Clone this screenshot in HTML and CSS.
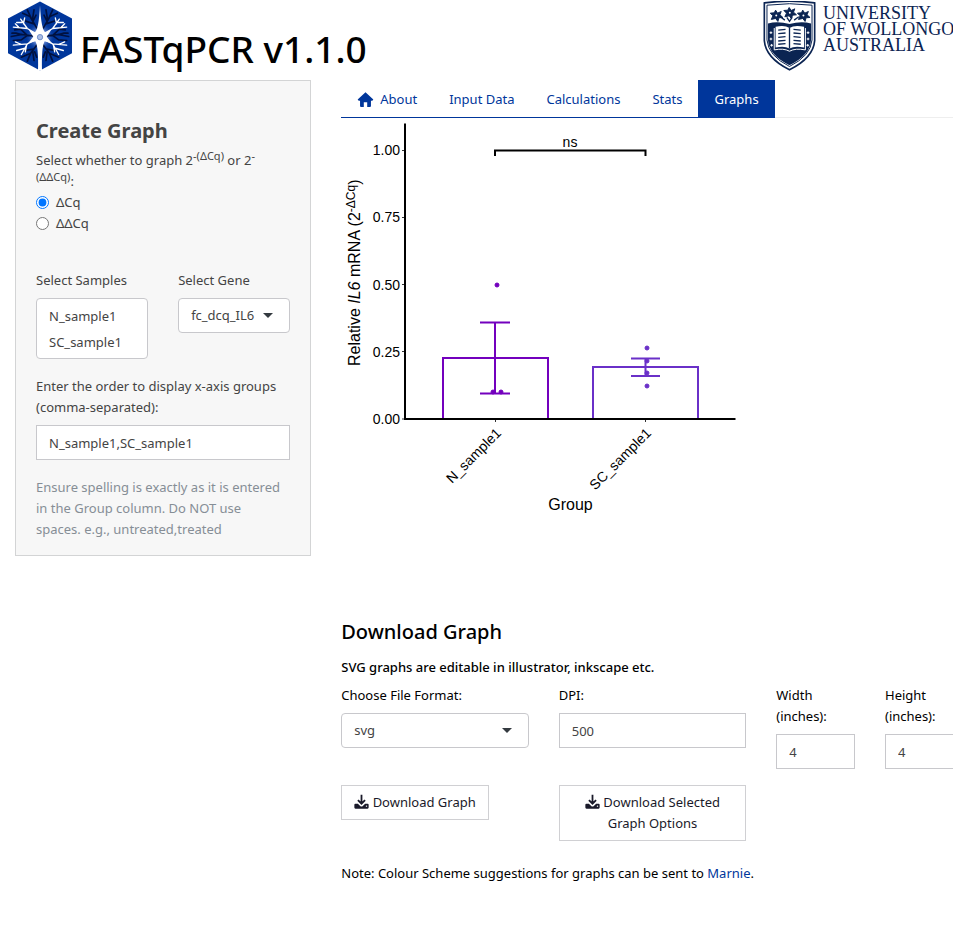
FILE: index.html
```html
<!DOCTYPE html>
<html lang="en">
<head>
<meta charset="utf-8">
<title>FASTqPCR v1.1.0</title>
<link rel="stylesheet" href="styles.css">
</head>
<body>
<svg width="0" height="0" class="defs" aria-hidden="true">
  <symbol id="download" viewBox="0 0 42 42">
    <path d="M21 2v24M11 17l10 10 10-10" fill="none" stroke="currentColor" stroke-width="5"/>
    <path d="M4 27h7l7 7q3 2 6 0l7-7h7q3 0 3 3v8q0 3-3 3H4q-3 0-3-3v-8q0-3 3-3z" fill="currentColor"/>
    <circle cx="35" cy="34" r="2" fill="#fff"/>
  </symbol>
</svg>
<div class="page">
  <header class="header">
    <svg class="logo" viewBox="24 3 192 207" role="img" aria-label="FASTqPCR logo">
      <defs>
        <radialGradient id="glow"><stop offset="0" stop-color="#b9cbf0"/><stop offset=".45" stop-color="#6e8ed4"/><stop offset="1" stop-color="#00369b" stop-opacity="0"/></radialGradient>
        <g id="half" fill="none" stroke-linecap="round" stroke-linejoin="round">
          <g stroke="#00113f" stroke-width="5">
            <path d="M130 82L150 48L172 38M143 60L138 28M147 52L158 28M138 70L163 62M141 62L132 44"/>
            <path d="M142 106L174 102L206 108M160 103L178 86L196 88M176 102L192 98L204 98M160 106L176 118L200 120M178 86L184 78"/>
            <path d="M130 134L148 158L176 170M142 150L138 180M148 158L158 182M140 146L164 150M136 154L130 170"/>
          </g>
          <g stroke="#fff" stroke-width="4">
            <path d="M124 104L158 84L178 56M158 84L200 80M170 70L166 52M174 66L190 66M182 82L194 70" />
            <path d="M124 114L158 130L176 162M158 130L200 134M168 144L190 150M160 132L164 154M176 132L194 124"/>
          </g>
        </g>
      </defs>
      <path d="M120 3L216 54V158L120 210L24 158V54z" fill="#00369b"/>
      <circle cx="120" cy="109" r="44" fill="url(#glow)"/>
      <use href="#half"/>
      <use href="#half" transform="matrix(-1 0 0 1 240 0)"/>
      <path d="M120 14Q124 92 137 96L154 88 140 109 156 128 134 122Q124 138 126 210H114Q116 138 106 122L84 128 100 109 86 88 103 96Q116 92 120 14z" fill="#fff"/>
      <circle cx="120" cy="110" r="8" fill="#a9bde6" stroke="#7190cb" stroke-width="3"/>
    </svg>
    <h1 class="title">FASTqPCR v1.1.0</h1>
    <div class="uow">
      <svg class="crest" viewBox="38 3 160 213" role="img" aria-label="University crest">
        <path d="M42 8Q118-2 194 8V122Q190 174 118 210Q46 174 42 122z" fill="#fff" stroke="#0b2452" stroke-width="5"/>
        <path d="M50 15Q118 6 186 15V120Q182 168 118 200Q54 168 50 120z" fill="#fff" stroke="#0b2452" stroke-width="3"/>
        <path d="M53 70Q84 62 118 72Q152 62 183 70V120Q180 166 118 196Q56 166 53 120z" fill="#0b2452"/>
        <g fill="#0b2452" stroke="#0b2452" stroke-width="3">
          <path id="flower" d="M76 30l6 9 11-5-4 10 9 8-12 1-3 11-7-9-13 3 5-11-8-8 12-1z"/>
          <use href="#flower" x="41" y="-8"/>
          <use href="#flower" x="82"/>
          <path d="M90 50l14 10M146 50l-14 10M110 52l8 12 8-12" stroke-width="4" fill="none"/>
        </g>
        <g fill="#fff"><circle cx="78" cy="46" r="3"/><circle cx="119" cy="38" r="3"/><circle cx="160" cy="46" r="3"/></g>
        <path d="M76 80Q104 74 118 84Q132 74 162 80V143Q134 136 118 146Q102 136 76 143z" fill="#fff"/>
        <path d="M72 84V150Q100 144 118 154Q136 144 166 150V84" fill="none" stroke="#fff" stroke-width="3"/>
        <path d="M118 84V146M84 90l22-2M84 101l22-2M84 112l22-2M84 123l22-2M84 133l22-2M130 88l22 2M130 99l22 2M130 110l22 2M130 121l22 2M130 131l22 2" stroke="#0b2452" stroke-width="4"/>
        <g fill="none" stroke="#fff" stroke-width="3"><path d="M58 98h8M62 94v8M58 117h8M62 113v8M60 136h8M64 132v8M170 98h8M174 94v8M170 117h8M174 113v8M169 136h8M173 132v8"/></g>
      </svg>
      <div class="uow-name">UNIVERSITY<br>OF WOLLONGONG<br>AUSTRALIA</div>
    </div>
  </header>

  <div class="layout">
    <aside class="sidebar">
      <h2 class="side-title">Create Graph</h2>
      <fieldset class="choices">
        <legend>Select whether to graph 2<sup>-(ΔCq)</sup> or 2<sup>-<wbr>(ΔΔCq)</sup>:</legend>
        <label class="radio"><input type="radio" name="method" checked>ΔCq</label>
        <label class="radio"><input type="radio" name="method">ΔΔCq</label>
      </fieldset>
      <div class="pair">
        <div class="field">
          <label for="samples">Select Samples</label>
          <select id="samples" class="list" multiple size="2"><option>N_sample1</option><option>SC_sample1</option></select>
        </div>
        <div class="field">
          <label for="gene">Select Gene</label>
          <div class="picker"><select id="gene" class="control"><option>fc_dcq_IL6</option></select></div>
        </div>
      </div>
      <div class="field order">
        <label for="order">Enter the order to display x-axis groups (comma-separated):</label>
        <input id="order" class="control" type="text" value="N_sample1,SC_sample1">
      </div>
      <p class="help">Ensure spelling is exactly as it is entered in the Group column. Do NOT use spaces. e.g., untreated,treated</p>
    </aside>

    <main class="main">
      <nav class="tabs">
        <a href="#about"><svg class="home" viewBox="0 0 48 44" aria-hidden="true"><path d="M24 1L47 22l-3 4h-4v15q0 3-3 3h-8V30h-10v14h-8q-3 0-3-3V26H4l-3-4z" fill="currentColor"/></svg>About</a>
        <a href="#input">Input Data</a>
        <a href="#calculations">Calculations</a>
        <a href="#stats">Stats</a>
        <a href="#graphs" class="active" aria-current="page">Graphs</a>
      </nav>
      <svg class="chart" viewBox="341 118 400 400" role="img" aria-label="Relative IL6 mRNA by group">
        <g class="tick-text" text-anchor="end">
          <text x="400" y="155">1.00</text><text x="400" y="222">0.75</text><text x="400" y="290">0.50</text><text x="400" y="357">0.25</text><text x="400" y="424">0.00</text>
        </g>
        <path d="M402 150.500h3M402 217.500h3M402 284.500h3M402 351.500h3M402 419h3M495.500 419v3M645.500 419v3" stroke="#333" stroke-width="1"/>
        <g class="group-a">
          <path d="M443 419V358H548V419M480 322.500H510M480 393.500H510M495 322.500V393.500"/>
          <circle cx="497" cy="285" r="2"/><circle cx="493" cy="392" r="2"/><circle cx="501" cy="392" r="2"/>
        </g>
        <g class="group-b">
          <path d="M593 419V367H698V419M631 358.500H660M631 376H660M645.500 358.500V376"/>
          <circle cx="647" cy="348" r="2"/><circle cx="647" cy="361" r="2"/><circle cx="647" cy="373" r="2"/><circle cx="647" cy="386" r="2"/>
        </g>
        <path class="axis" d="M405 123.500V419H735.500"/>
        <path class="bracket" d="M495 156V150.500H645.500V156"/>
        <text class="tick-text" x="570" y="147" text-anchor="middle">ns</text>
        <text class="tick-text" text-anchor="end" transform="translate(502 434) rotate(-45)">N_sample1</text>
        <text class="tick-text" text-anchor="end" transform="translate(652 434) rotate(-45)">SC_sample1</text>
        <text class="axis-title" x="570.500" y="510" text-anchor="middle">Group</text>
        <text class="axis-title" transform="translate(360 366) rotate(-90)">Relative <tspan font-style="italic">IL6</tspan> mRNA (2<tspan class="power" dy="-5">-ΔCq</tspan><tspan dy="5">)</tspan></text>
      </svg>

      <section class="download">
        <h2>Download Graph</h2>
        <p class="hint">SVG graphs are editable in illustrator, inkscape etc.</p>
        <div class="options">
          <div class="field">
            <label for="format">Choose File Format:</label>
            <div class="picker wide"><select id="format" class="control"><option>svg</option></select></div>
          </div>
          <div class="field">
            <label for="dpi">DPI:</label>
            <input id="dpi" class="control" type="text" value="500">
          </div>
          <div class="field">
            <label for="width">Width (inches):</label>
            <input id="width" class="control" type="text" value="4">
          </div>
          <div class="field">
            <label for="height">Height (inches):</label>
            <input id="height" class="control" type="text" value="4">
          </div>
        </div>
        <div class="options actions">
          <button type="button" class="button"><svg class="icon" aria-hidden="true"><use href="#download"/></svg> Download Graph</button>
          <button type="button" class="button fill"><svg class="icon" aria-hidden="true"><use href="#download"/></svg> Download Selected Graph Options</button>
        </div>
        <p class="note">Note: Colour Scheme suggestions for graphs can be sent to <a href="#marnie">Marnie</a>.</p>
      </section>
    </main>
  </div>
</div>
</body>
</html>
```
FILE: styles.css
```css
* { box-sizing: border-box; }
html { overflow-x: hidden; }
body {
  margin: 0;
  overflow-x: hidden;
  background: #fff;
  color: #000;
  font: 13px/21px "Noto Sans", "Open Sans", sans-serif;
}
.defs { position: absolute; }
h1, h2, p { margin: 0; }
a { color: #00369b; text-decoration: none; }

/* Twelve-column page that stays wide on small windows */
.page { min-width: 1305px; }

.header { display: flex; height: 80px; padding: 1px 8px 0; }
.logo { width: 64px; height: 70px; }
.title {
  width: 691px;
  padding: 21px 0 0 8px;
  font-size: 37px;
  font-weight: 500;
  line-height: 54px;
}
.uow { display: flex; gap: 7px; }
.crest { width: 53px; height: 71px; }
.uow-name {
  padding-top: 4px;
  color: #0b2452;
  font: 18px/16px "Liberation Serif", serif;
  white-space: nowrap;
}

.layout {
  display: grid;
  grid-template-columns: 3fr 9fr;
  align-items: start;
}
.sidebar {
  margin: 0 15px;
  padding: 36px 20px 15px;
  border: 1px solid #d3d4d5;
  background: #f7f7f7;
  color: #444;
}
.side-title { margin-bottom: 6px; font-size: 20px; line-height: 27px; }
.choices { margin: 0; padding: 0; border: 0; min-width: 0; }
.choices legend { padding: 0; }
sup { position: relative; top: -5px; font-size: 11px; line-height: 0; vertical-align: baseline; }
.radio { display: flex; align-items: center; }
.radio input { width: 13px; height: 13px; margin: 0 7px 0 0; accent-color: #0075ff; }

.field { display: flex; flex-direction: column; gap: 7px; }
.pair { display: grid; grid-template-columns: 1fr 1fr; gap: 30px; margin-top: 36px; }
.order { margin-top: 17px; }
.help { margin-top: 17px; padding-right: 8px; color: #868e96; }

.control, .list {
  width: 100%;
  border: 1px solid #c8c8cc;
  border-radius: 0;
  background: #fff;
  color: #444;
  font: inherit;
  outline: 0;
}
.control { height: 35px; padding: 0 12px; appearance: none; }
.list { height: 61px; padding: 4px 0; border-radius: 4px; overflow: hidden; }
.list option { min-height: 26px; padding: 4px 12px; }
.picker { position: relative; }
.picker .control { border-radius: 4px; }
.picker::after {
  content: "";
  position: absolute;
  top: 15px;
  right: 17px;
  border: 5px solid transparent;
  border-top-color: #343a40;
  border-bottom: 0;
  pointer-events: none;
}

.main { padding: 0 15px; }
.tabs { display: flex; border-bottom: 1px solid #eee; }
.tabs a {
  display: flex;
  align-items: center;
  gap: 6px;
  height: 38px;
  margin-bottom: -1px;
  padding: 1px 16px 0;
  border-bottom: 1px solid #00369b;
}
.tabs .active { background: #00369b; color: #fff; }
.home { width: 17px; height: 15px; }

.chart { display: block; width: 400px; height: 400px; font-family: "Liberation Sans", Arial, sans-serif; }
.tick-text { font-size: 14px; }
.axis-title { font-size: 16px; }
.power { font-size: 12px; }
.axis { fill: none; stroke: #000; stroke-width: 2; }
.bracket { fill: none; stroke: #000; stroke-width: 2; }
.chart path { fill: none; }
.group-a { stroke: #7300bd; stroke-width: 2; fill: #7300bd; }
.group-b { stroke: #6a30c8; stroke-width: 2; fill: #6a30c8; }
.chart circle { stroke-width: 1; }

.download { margin-top: 100px; }
.download h2 { font-size: 20px; font-weight: 500; line-height: 27px; }
.hint { margin: 12px 0 7px; font-weight: 500; }
.options { display: grid; grid-template-columns: 2fr 2fr 1fr 1fr 3fr; margin: 0 -15px; }
.options .field { padding: 0 15px; }
.actions { margin-top: 16px; align-items: start; }
.button {
  justify-self: start;
  margin: 0 15px;
  padding: 6px 12px;
  border: 1px solid #d0d0d3;
  background: #fff;
  color: #1a1a2a;
  font: inherit;
}
.fill { justify-self: stretch; padding: 6px 20px; }
.icon { width: 15px; height: 15px; vertical-align: -2px; }
.note { margin-top: 22px; }
```
